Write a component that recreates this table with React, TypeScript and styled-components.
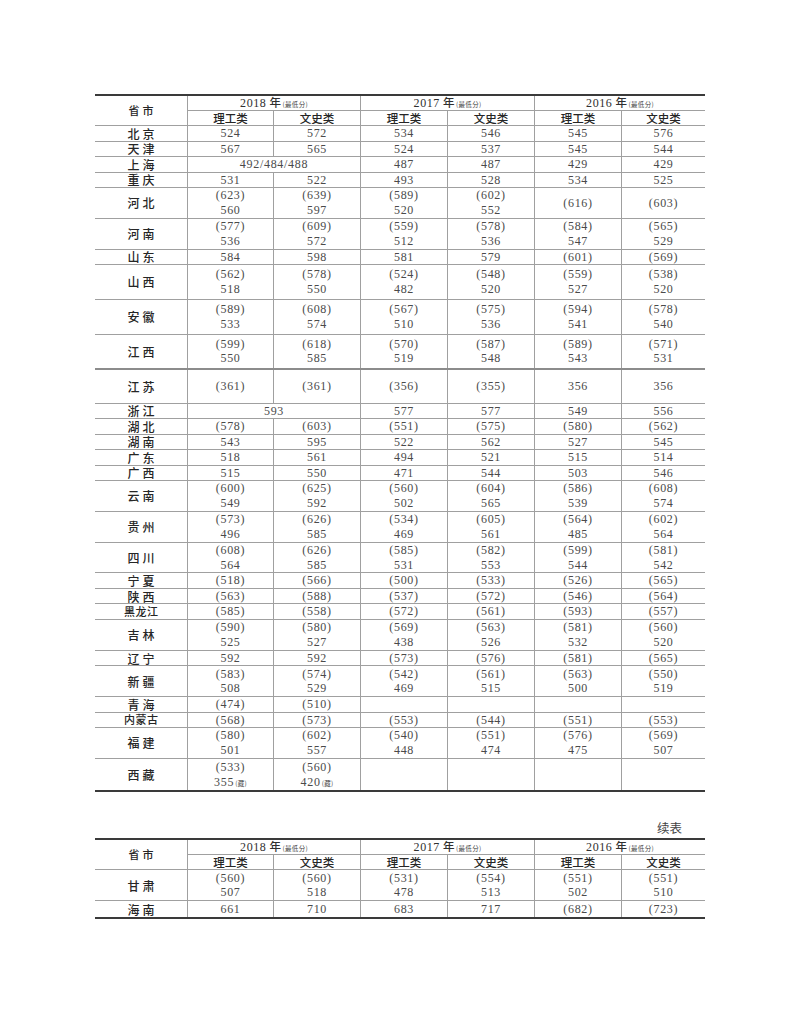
import React from "react";
import styled, { createGlobalStyle } from "styled-components";

const Global = createGlobalStyle`
  html, body { margin: 0; padding: 0; background: #ffffff; }
  body { font-family: "Liberation Serif", "Noto Sans CJK SC", serif; }
`;

const COLS = "93px 86px 87px 87px 87px 87px 83px";
const LINE = "#a0a0a0";
const HEAVY = "#3a3a3a";

const Page = styled.div`
  width: 800px;
  min-height: 1035px;
  box-sizing: border-box;
  padding: 94px 95px 0 95px;
`;

const Table = styled.div`
  width: 610px;
  border-top: 2px solid ${HEAVY};
  border-bottom: 2px solid ${HEAVY};
`;

const Header = styled.div`
  display: grid;
  grid-template-columns: ${COLS};
  grid-template-rows: 15px 15px;
`;

const HCell = styled.div<{ $col?: string; $row?: string; $last?: boolean }>`
  grid-column: ${(p) => p.$col || "auto"};
  grid-row: ${(p) => p.$row || "auto"};
  box-sizing: border-box;
  border-right: ${(p) => (p.$last ? "none" : `1px solid ${LINE}`)};
  border-bottom: 1px solid ${LINE};
  display: flex;
  align-items: center;
  justify-content: center;
  color: #262626;
  white-space: nowrap;
`;

const CnLabel = styled.span<{ $size?: number; $ls?: number }>`
  font-family: "Noto Sans CJK SC", sans-serif;
  font-size: ${(p) => p.$size || 12}px;
  letter-spacing: ${(p) => p.$ls || 0}px;
  margin-right: -${(p) => p.$ls || 0}px;
  font-weight: 500;
  line-height: 13px;
  color: #262626;
  white-space: nowrap;
`;

const YearText = styled.span`
  font-family: "Liberation Serif", serif;
  font-size: 12px;
  letter-spacing: 0.6px;
  color: #303030;
  line-height: 13px;
  display: inline-flex;
  align-items: baseline;
`;

const YearMark = styled.span`
  font-family: "Noto Sans CJK SC", sans-serif;
  font-size: 11.5px;
  font-weight: 500;
  margin-left: 3px;
`;

const Tiny = styled.span`
  font-family: "Noto Sans CJK SC", sans-serif;
  font-size: 6.5px;
  letter-spacing: 0.3px;
  color: #444;
  margin-left: 1px;
`;

const Row = styled.div<{ $h: number; $thick?: boolean }>`
  display: grid;
  grid-template-columns: ${COLS};
  height: ${(p) => p.$h}px;
  box-sizing: border-box;
  border-bottom: ${(p) => (p.$thick ? `2px solid #8c8c8c` : `1px solid ${LINE}`)};
  &:last-child { border-bottom: none; }
`;

const Cell = styled.div<{ $span?: number }>`
  grid-column: span ${(p) => p.$span || 1};
  box-sizing: border-box;
  border-right: 1px solid ${LINE};
  &:last-child { border-right: none; }
  display: flex;
  flex-direction: column;
  align-items: center;
  justify-content: center;
  min-height: 0;
`;

const Num = styled.div`
  font-family: "Liberation Serif", serif;
  font-size: 12px;
  line-height: 14.5px;
  height: 14.5px;
  letter-spacing: 0.7px;
  color: #4a4a4a;
  white-space: nowrap;
`;

const Label = styled.div`
  text-align: right;
  width: 610px;
  box-sizing: border-box;
  padding-right: 23px;
  margin-top: 26px;
  height: 20px;
  line-height: 20px;
  font-family: "Noto Sans CJK SC", sans-serif;
  font-size: 12.5px;
  color: #444;
`;

type CellData = string | { t: string; span: number };
type RowData = { name: string; h: number; thick?: boolean; cells: CellData[] };

const S = 15.5;
const D = 30.8;

const rows: RowData[] = [
  { name: "北京", h: S, cells: ["524", "572", "534", "546", "545", "576"] },
  { name: "天津", h: S, cells: ["567", "565", "524", "537", "545", "544"] },
  { name: "上海", h: S, cells: [{ t: "492/484/488", span: 2 }, "487", "487", "429", "429"] },
  { name: "重庆", h: S, cells: ["531", "522", "493", "528", "534", "525"] },
  { name: "河北", h: D, cells: ["(623)\n560", "(639)\n597", "(589)\n520", "(602)\n552", "(616)", "(603)"] },
  { name: "河南", h: D, cells: ["(577)\n536", "(609)\n572", "(559)\n512", "(578)\n536", "(584)\n547", "(565)\n529"] },
  { name: "山东", h: S, cells: ["584", "598", "581", "579", "(601)", "(569)"] },
  { name: "山西", h: 34.5, cells: ["(562)\n518", "(578)\n550", "(524)\n482", "(548)\n520", "(559)\n527", "(538)\n520"] },
  { name: "安徽", h: 35, cells: ["(589)\n533", "(608)\n574", "(567)\n510", "(575)\n536", "(594)\n541", "(578)\n540"] },
  { name: "江西", h: 35, thick: true, cells: ["(599)\n550", "(618)\n585", "(570)\n519", "(587)\n548", "(589)\n543", "(571)\n531"] },
  { name: "江苏", h: 34, cells: ["(361)", "(361)", "(356)", "(355)", "356", "356"] },
  { name: "浙江", h: S, cells: [{ t: "593", span: 2 }, "577", "577", "549", "556"] },
  { name: "湖北", h: S, cells: ["(578)", "(603)", "(551)", "(575)", "(580)", "(562)"] },
  { name: "湖南", h: S, cells: ["543", "595", "522", "562", "527", "545"] },
  { name: "广东", h: S, cells: ["518", "561", "494", "521", "515", "514"] },
  { name: "广西", h: S, cells: ["515", "550", "471", "544", "503", "546"] },
  { name: "云南", h: D, cells: ["(600)\n549", "(625)\n592", "(560)\n502", "(604)\n565", "(586)\n539", "(608)\n574"] },
  { name: "贵州", h: D, cells: ["(573)\n496", "(626)\n585", "(534)\n469", "(605)\n561", "(564)\n485", "(602)\n564"] },
  { name: "四川", h: D, cells: ["(608)\n564", "(626)\n585", "(585)\n531", "(582)\n553", "(599)\n544", "(581)\n542"] },
  { name: "宁夏", h: S, cells: ["(518)", "(566)", "(500)", "(533)", "(526)", "(565)"] },
  { name: "陕西", h: S, cells: ["(563)", "(588)", "(537)", "(572)", "(546)", "(564)"] },
  { name: "黑龙江", h: S, cells: ["(585)", "(558)", "(572)", "(561)", "(593)", "(557)"] },
  { name: "吉林", h: D, cells: ["(590)\n525", "(580)\n527", "(569)\n438", "(563)\n526", "(581)\n532", "(560)\n520"] },
  { name: "辽宁", h: S, cells: ["592", "592", "(573)", "(576)", "(581)", "(565)"] },
  { name: "新疆", h: D, cells: ["(583)\n508", "(574)\n529", "(542)\n469", "(561)\n515", "(563)\n500", "(550)\n519"] },
  { name: "青海", h: S, cells: ["(474)", "(510)", "", "", "", ""] },
  { name: "内蒙古", h: S, cells: ["(568)", "(573)", "(553)", "(544)", "(551)", "(553)"] },
  { name: "福建", h: D, cells: ["(580)\n501", "(602)\n557", "(540)\n448", "(551)\n474", "(576)\n475", "(569)\n507"] },
  { name: "西藏", h: 31.5, cells: ["(533)\n355*", "(560)\n420*", "", "", "", ""] },
];

const rows2: RowData[] = [
  { name: "甘肃", h: 31, cells: ["(560)\n507", "(560)\n518", "(531)\n478", "(554)\n513", "(551)\n502", "(551)\n510"] },
  { name: "海南", h: S, cells: ["661", "710", "683", "717", "(682)", "(723)"] },
];

function NumLine({ text }: { text: string }) {
  if (text.endsWith("*")) {
    return (
      <Num>
        {text.slice(0, -1)}
        <Tiny>(藏)</Tiny>
      </Num>
    );
  }
  return <Num>{text}</Num>;
}

function TableHeader() {
  const years = ["2018", "2017", "2016"];
  return (
    <Header>
      <HCell $row="1 / span 2">
        <CnLabel $size={11} $ls={3}>省市</CnLabel>
      </HCell>
      {years.map((y, i) => (
        <HCell key={y} $col="span 2" $last={i === 2}>
          <YearText>
            {y}
            <YearMark>年</YearMark>
            <Tiny>(最低分)</Tiny>
          </YearText>
        </HCell>
      ))}
      {[0, 1, 2, 3, 4, 5].map((i) => (
        <HCell key={i} $last={i === 5}>
          <CnLabel $size={11.5}>{i % 2 === 0 ? "理工类" : "文史类"}</CnLabel>
        </HCell>
      ))}
    </Header>
  );
}

function Body({ data }: { data: RowData[] }) {
  return (
    <>
      {data.map((r) => (
        <Row key={r.name} $h={r.h} $thick={r.thick}>
          <Cell>
            <CnLabel $size={r.name.length > 2 ? 11 : 12} $ls={r.name.length > 2 ? 0.5 : 3}>
              {r.name}
            </CnLabel>
          </Cell>
          {r.cells.map((c, i) => {
            const t = typeof c === "string" ? c : c.t;
            const span = typeof c === "string" ? 1 : c.span;
            return (
              <Cell key={i} $span={span}>
                {t
                  ? t.split("\n").map((line, j) => <NumLine key={j} text={line} />)
                  : null}
              </Cell>
            );
          })}
        </Row>
      ))}
    </>
  );
}

export default function App() {
  return (
    <>
      <Global />
      <Page>
        <Table>
          <TableHeader />
          <Body data={rows} />
        </Table>
        <Label>续表</Label>
        <Table>
          <TableHeader />
          <Body data={rows2} />
        </Table>
      </Page>
    </>
  );
}
